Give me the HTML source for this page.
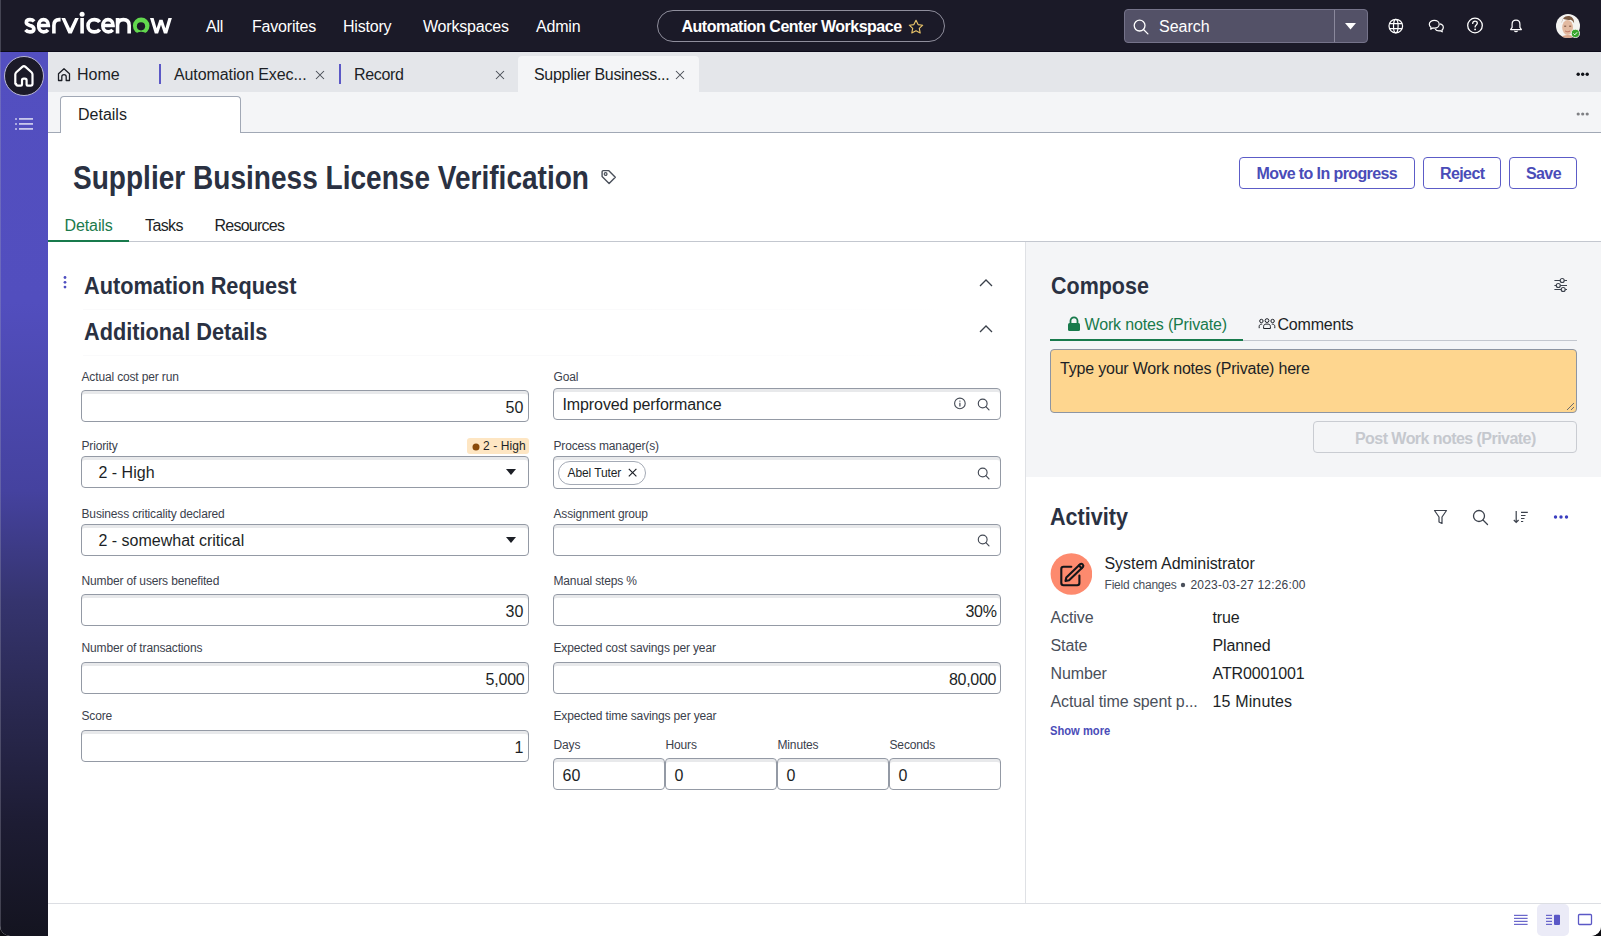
<!DOCTYPE html>
<html><head><meta charset="utf-8">
<style>
*{box-sizing:border-box;margin:0;padding:0}
html,body{width:1601px;height:936px;overflow:hidden;background:#0d0d12}
body{font-family:"Liberation Sans",sans-serif;position:relative}
.a{position:absolute}
.t{white-space:nowrap}
#win{position:absolute;left:0;top:0;width:1601px;height:936px;border-radius:0 0 10px 10px;overflow:hidden;background:#fff}
</style></head><body><div id="win">
<div class="a" style="left:0px;top:0px;width:1601px;height:52px;background:#1b1a28"></div>
<div class="a" style="left:0px;top:51px;width:1601px;height:1px;background:#0c0b1a"></div>
<svg class="a" style="left:20px;top:8px;" width="160" height="32" viewBox="20 8 160 32"><g fill="none" stroke="#fff" stroke-width="3.6"><path d="M34.2 21.4C33 20.1 31.6 19.65 30 19.65 27.8 19.65 26.3 20.7 26.3 22.5 26.3 24.4 28 24.9 30 25.5 32.2 26.1 33.9 26.9 33.9 28.9 33.9 30.9 32.1 31.85 30 31.85 28.1 31.85 26.5 31.1 25.5 29.8"/><path d="M38.7 25.5H48.35C48.35 22 46.3 19.65 43.5 19.65 40.6 19.65 38.65 22.3 38.65 25.75 38.65 29.3 40.7 31.85 43.7 31.85 45.6 31.85 47 31.1 48 29.8"/><path d="M53.9 33.5V25.5C53.9 21.6 56 19.65 59.2 19.65H60.6"/><path d="M82.1 18V33.5"/><path d="M99.6 22.1C98.5 20.5 96.6 19.65 94.3 19.65 90.6 19.65 88 22.3 88 25.75 88 29.2 90.6 31.85 94.3 31.85 96.6 31.85 98.5 31 99.6 29.4"/><path d="M102.9 25.5H113.05C113.05 22 111 19.65 108 19.65 104.9 19.65 102.85 22.3 102.85 25.75 102.85 29.3 105 31.85 108.2 31.85 110.2 31.85 111.7 31.1 112.7 29.8"/><path d="M117.55 18V33.5M117.55 25.5C117.55 21.8 119.8 19.65 123.35 19.65 126.9 19.65 129.15 21.8 129.15 25.5V33.5"/></g><g fill="#fff"><circle cx="82.1" cy="14.3" r="2.5"/><path d="M61.4 18H65.1L70.1 28.4 75.1 18H78.8L71.8 33.5H68.4Z"/><path d="M150 18H153.6L156.6 28.2 159.4 19.8H162.6L165.4 28.2 168.4 18H171.9L167.2 33.5H163.9L161 24.8 158.1 33.5H154.8Z"/></g><circle cx="141.2" cy="25.8" r="8.3" fill="#62d84e"/><circle cx="141" cy="26.3" r="4.1" fill="#1b1a28"/><circle cx="141.15" cy="39.7" r="7.9" fill="#1b1a28"/></svg>
<div class="a t " style="left:206px;top:19.0px;font-size:16px;line-height:16px;color:#fff;letter-spacing:-0.2px;">All</div>
<div class="a t " style="left:252px;top:19.0px;font-size:16px;line-height:16px;color:#fff;letter-spacing:-0.2px;">Favorites</div>
<div class="a t " style="left:343px;top:19.0px;font-size:16px;line-height:16px;color:#fff;letter-spacing:-0.2px;">History</div>
<div class="a t " style="left:423px;top:19.0px;font-size:16px;line-height:16px;color:#fff;letter-spacing:-0.2px;">Workspaces</div>
<div class="a t " style="left:536px;top:19.0px;font-size:16px;line-height:16px;color:#fff;letter-spacing:-0.2px;">Admin</div>
<div class="a" style="left:657px;top:10px;width:288px;height:32px;border:1px solid #8f8e9c;border-radius:16px"></div>
<div class="a t " style="left:681.5px;top:18.7px;font-size:16px;line-height:16px;color:#fff;font-weight:700;letter-spacing:-0.5px;">Automation Center Workspace</div>
<svg class="a" style="left:907px;top:18px;" width="18" height="17" viewBox="0 0 18 17"><path d="M9 2.3l2.1 4.3 4.6.6-3.4 3.2.9 4.6L9 12.8l-4.2 2.2.9-4.6-3.4-3.2 4.6-.6z" fill="none" stroke="#e9c46a" stroke-width="1.15" stroke-linejoin="round"/></svg>
<div class="a" style="left:1124px;top:9px;width:244px;height:34px;background:#535167;border:1px solid #75738a;border-radius:4px"></div>
<div class="a" style="left:1334px;top:10px;width:1px;height:32px;background:#8a889c"></div>
<svg class="a" style="left:1132px;top:18px;" width="18" height="18" viewBox="0 0 18 18"><circle cx="7.6" cy="7.6" r="5.4" fill="none" stroke="#fff" stroke-width="1.3"/><path d="M11.5 11.5l4.4 4.4" stroke="#fff" stroke-width="1.3" stroke-linecap="round"/></svg>
<div class="a t " style="left:1159px;top:18.7px;font-size:16px;line-height:16px;color:#fff;">Search</div>
<svg class="a" style="left:1344px;top:22px;" width="13" height="8" viewBox="0 0 13 8"><path d="M1 1h11L6.5 7.5z" fill="#fff"/></svg>
<svg class="a" style="left:1388px;top:18px;" width="16" height="16" viewBox="0 0 16 16"><g fill="none" stroke="#fff" stroke-width="1.2"><circle cx="7.8" cy="8.1" r="6.8"/><ellipse cx="7.8" cy="8.1" rx="2.3" ry="6.8"/><path d="M1.5 5.6h12.6M1.5 10.6h12.6"/></g></svg>
<svg class="a" style="left:1428px;top:19px;" width="17" height="15" viewBox="0 0 17 15"><g fill="none" stroke="#fff" stroke-width="1.2" stroke-linejoin="round"><path d="M6.3 1.3c2.8 0 4.9 1.8 4.9 3.9s-2.1 3.9-4.9 3.9c-.5 0-1-.1-1.5-.2L2.7 10.2l.3-2C2 7.5 1.3 6.4 1.3 5.2 1.3 3.1 3.5 1.3 6.3 1.3z"/><path d="M11.9 4.9c2 .4 3.4 1.8 3.4 3.5 0 1-.5 1.9-1.3 2.5l.2 1.9-1.9-1.1c-.4.1-.9.2-1.3.2-1.7 0-3.1-.7-3.8-1.8"/></g></svg>
<svg class="a" style="left:1466px;top:17px;" width="18" height="17" viewBox="0 0 18 17"><g fill="none" stroke="#fff" stroke-width="1.3"><circle cx="9" cy="8.5" r="7.3"/><path d="M6.7 6.4c0-1.3 1-2.2 2.3-2.2s2.3.9 2.3 2.1c0 1.6-2.2 1.8-2.2 3.6" stroke-linecap="round"/></g><circle cx="9.1" cy="12.4" r=".9" fill="#fff"/></svg>
<svg class="a" style="left:1509px;top:19px;" width="14" height="14" viewBox="0 0 14 14"><g fill="none" stroke="#fff" stroke-width="1.2" stroke-linejoin="round"><path d="M7 1.2c-2.3 0-3.9 1.8-3.9 4v3.2L1.6 10.6h10.8l-1.5-2.2V5.2C10.9 3 9.3 1.2 7 1.2z"/><path d="M5.5 11.8c.3.6.8.9 1.5.9s1.2-.3 1.5-.9"/></g></svg>
<svg class="a" style="left:1554px;top:12px;" width="28" height="28" viewBox="0 0 28 28"><defs><clipPath id="av"><circle cx="14" cy="14" r="12"/></clipPath></defs><circle cx="14" cy="14" r="12" fill="#f4f3f1"/><g clip-path="url(#av)"><path d="M6 27c1.5-3 4-4 8-4s6 1 7.5 4z" fill="#d9a58a"/><ellipse cx="13.6" cy="15.5" rx="5.4" ry="7.6" fill="#e2b9a0"/><path d="M7.8 11.5c-.3-4.5 2.5-7.6 6.3-7.6 3.6 0 6.3 2.6 6 7.5-.8-2-2-3.2-3.6-3.6-2 .5-5.5.2-7.2-1.2-.9 1.2-1.3 2.9-1.5 4.9z" fill="#7b5a42"/><path d="M10.2 14.2h2M15.2 14.2h2" stroke="#6e4a38" stroke-width="1"/><path d="M11.2 19c1.4 1 3.4 1 4.8 0" stroke="#b86a5a" stroke-width="1" fill="none"/></g><circle cx="21.4" cy="21.4" r="4.1" fill="#36a52b" stroke="#f4f3f1" stroke-width="0.9"/><path d="M19.5 21.5l1.3 1.3 2.3-2.5" stroke="#fff" stroke-width="1" fill="none"/></svg>
<div class="a" style="left:0px;top:52px;width:48px;height:884px;background:linear-gradient(180deg,#534fc0 0px,#524ebe 250px,#45429f 439px,#35346e 550px,#29284f 661px,#1d1c33 772px,#141420 884px)"></div>
<div class="a" style="left:0px;top:0px;width:1px;height:936px;background:rgba(170,170,185,0.3)"></div>
<svg class="a" style="left:4px;top:56px;" width="40" height="40" viewBox="0 0 40 40"><circle cx="20" cy="20" r="19.5" fill="#1b1a28" stroke="#b9b7d4" stroke-width="1"/><path d="M11.3 27.8v-9.3c0-.9.4-1.7 1-2.3l6-5.3c.9-.8 2.3-.8 3.2 0l6 5.3c.6.6 1 1.4 1 2.3v9.3c0 1-.8 1.8-1.8 1.8h-3c-.6 0-1.1-.5-1.1-1.1v-4.1c0-1-.8-1.7-1.7-1.7h-1.2c-.9 0-1.7.7-1.7 1.7v4.1c0 .6-.5 1.1-1.1 1.1h-3c-1 0-1.8-.8-1.8-1.8z" fill="none" stroke="#fff" stroke-width="2.2" stroke-linejoin="round"/></svg>
<svg class="a" style="left:14px;top:117px;" width="20" height="14" viewBox="0 0 20 14"><g fill="#c9c8ec"><rect x="1" y="1" width="2" height="2" rx="1"/><rect x="1" y="6" width="2" height="2" rx="1"/><rect x="1" y="11" width="2" height="2" rx="1"/><rect x="5" y="1" width="14" height="1.8"/><rect x="5" y="6" width="14" height="1.8"/><rect x="5" y="11" width="14" height="1.8"/></g></svg>
<div class="a" style="left:48px;top:52px;width:1553px;height:40px;background:#e4e6ea"></div>
<svg class="a" style="left:57px;top:67px;" width="14" height="15" viewBox="0 0 14 15"><path d="M1.5 13.5V6.8L7 1.8l5.5 5v6.7H9.2V9.8a2.2 2.2 0 0 0-4.4 0v3.7z" fill="none" stroke="#1c1f26" stroke-width="1.3" stroke-linejoin="round"/></svg>
<div class="a t " style="left:77px;top:66.7px;font-size:16px;line-height:16px;color:#1c1f26;">Home</div>
<div class="a" style="left:159px;top:64px;width:1.5px;height:20px;background:#5b58c6"></div>
<div class="a t " style="left:174px;top:66.7px;font-size:16px;line-height:16px;color:#1c1f26;letter-spacing:-0.1px;">Automation Exec...</div>
<svg class="a" style="left:315px;top:70px;" width="10" height="10" viewBox="0 0 10 10"><path d="M1 1l8 8M9 1L1 9" stroke="#454a53" stroke-width="1.05"/></svg>
<div class="a" style="left:339px;top:64px;width:1.5px;height:20px;background:#5b58c6"></div>
<div class="a t " style="left:354px;top:66.7px;font-size:16px;line-height:16px;color:#1c1f26;letter-spacing:-0.35px;">Record</div>
<svg class="a" style="left:495px;top:70px;" width="10" height="10" viewBox="0 0 10 10"><path d="M1 1l8 8M9 1L1 9" stroke="#454a53" stroke-width="1.05"/></svg>
<div class="a" style="left:518px;top:56px;width:181px;height:36px;background:#f4f5f7;border-radius:4px 4px 0 0"></div>
<div class="a t " style="left:534px;top:66.7px;font-size:16px;line-height:16px;color:#1c1f26;letter-spacing:-0.3px;">Supplier Business...</div>
<svg class="a" style="left:675px;top:70px;" width="10" height="10" viewBox="0 0 10 10"><path d="M1 1l8 8M9 1L1 9" stroke="#454a53" stroke-width="1.05"/></svg>
<svg class="a" style="left:1575px;top:71px;" width="16" height="7" viewBox="0 0 16 7"><circle cx="3.2" cy="3.2" r="1.7" fill="#101218"/><circle cx="7.7" cy="3.2" r="1.7" fill="#101218"/><circle cx="12.2" cy="3.2" r="1.7" fill="#101218"/></svg>
<div class="a" style="left:48px;top:92px;width:1553px;height:41px;background:#f4f5f7"></div>
<div class="a" style="left:48px;top:132px;width:1553px;height:1px;background:#a1a8b5"></div>
<div class="a" style="left:60px;top:96px;width:181px;height:37px;background:#fff;border:1px solid #a1a8b5;border-bottom:none;border-radius:4px 4px 0 0"></div>
<div class="a t " style="left:78px;top:106.7px;font-size:16px;line-height:16px;color:#1c1f26;">Details</div>
<svg class="a" style="left:1575px;top:111px;" width="16" height="7" viewBox="0 0 16 7"><circle cx="3.2" cy="3" r="1.6" fill="#7f8084"/><circle cx="7.7" cy="3" r="1.6" fill="#7f8084"/><circle cx="12.2" cy="3" r="1.6" fill="#7f8084"/></svg>
<div class="a" style="left:48px;top:133px;width:1553px;height:803px;background:#fff"></div>
<div class="a t " style="left:72.5px;top:161.0px;font-size:33px;line-height:33px;color:#2a3142;font-weight:700;transform:scaleX(0.85);transform-origin:0 0;">Supplier Business License Verification</div>
<svg class="a" style="left:599px;top:168px;" width="18" height="18" viewBox="0 0 18 18"><path d="M4.3 2.6H9.6L16.3 9.3 10.1 15.4 3.1 8.5V3.8a1.2 1.2 0 0 1 1.2-1.2z" fill="none" stroke="#4a505b" stroke-width="1.4" stroke-linejoin="round"/><circle cx="6.6" cy="6" r="1.4" fill="none" stroke="#4a505b" stroke-width="1.2"/></svg>
<div class="a" style="left:1239px;top:157px;width:176px;height:32px;border:1px solid #5c5cc7;border-radius:4px;background:#fff"></div>
<div class="a t " style="left:1256.5px;top:165.7px;font-size:16px;line-height:16px;color:#4a4cb8;font-weight:700;letter-spacing:-0.6px;">Move to In progress</div>
<div class="a" style="left:1423px;top:157px;width:78px;height:32px;border:1px solid #5c5cc7;border-radius:4px;background:#fff"></div>
<div class="a t " style="left:1440px;top:165.7px;font-size:16px;line-height:16px;color:#4a4cb8;font-weight:700;letter-spacing:-0.6px;">Reject</div>
<div class="a" style="left:1509px;top:157px;width:68px;height:32px;border:1px solid #5c5cc7;border-radius:4px;background:#fff"></div>
<div class="a t " style="left:1526px;top:165.7px;font-size:16px;line-height:16px;color:#4a4cb8;font-weight:700;letter-spacing:-0.6px;">Save</div>
<div class="a t " style="left:64.5px;top:217.7px;font-size:16px;line-height:16px;color:#1b7a4c;letter-spacing:-0.1px;">Details</div>
<div class="a t " style="left:145px;top:217.7px;font-size:16px;line-height:16px;color:#1c1f26;letter-spacing:-0.6px;">Tasks</div>
<div class="a t " style="left:214.5px;top:217.7px;font-size:16px;line-height:16px;color:#1c1f26;letter-spacing:-0.75px;">Resources</div>
<div class="a" style="left:48px;top:241px;width:1553px;height:1px;background:#c3c7cf"></div>
<div class="a" style="left:48px;top:240px;width:81px;height:2px;background:#187a4c"></div>
<svg class="a" style="left:62px;top:275px;" width="6" height="15" viewBox="0 0 6 15"><circle cx="3" cy="2.5" r="1.4" fill="#4f4fc0"/><circle cx="3" cy="7.3" r="1.4" fill="#4f4fc0"/><circle cx="3" cy="12.1" r="1.4" fill="#4f4fc0"/></svg>
<div class="a t " style="left:83.5px;top:273.9px;font-size:24px;line-height:24px;color:#2a3142;font-weight:700;transform:scaleX(0.905);transform-origin:0 0;">Automation Request</div>
<svg class="a" style="left:977.5px;top:278px;" width="16" height="10" viewBox="0 0 16 10"><path d="M2 8l6-6 6 6" fill="none" stroke="#3a404a" stroke-width="1.3"/></svg>
<div class="a" style="left:83px;top:309px;width:880px;height:1px;background:linear-gradient(90deg,#fafafb,#fafafb 60%,#fff)"></div>
<div class="a t " style="left:83.5px;top:319.9px;font-size:24px;line-height:24px;color:#2a3142;font-weight:700;transform:scaleX(0.905);transform-origin:0 0;">Additional Details</div>
<svg class="a" style="left:977.5px;top:324px;" width="16" height="10" viewBox="0 0 16 10"><path d="M2 8l6-6 6 6" fill="none" stroke="#3a404a" stroke-width="1.3"/></svg>
<div class="a" style="left:83px;top:355px;width:880px;height:1px;background:linear-gradient(90deg,#fafafb,#fafafb 60%,#fff)"></div>
<div class="a t " style="left:81.5px;top:370.7px;font-size:12px;line-height:12px;color:#3b414c;letter-spacing:-0.15px;">Actual cost per run</div>
<div class="a" style="left:81px;top:390px;width:448px;height:32px;border:1px solid #949aa5;border-radius:4px;background:#fff;box-shadow:inset 0 3px 0 #e8e9eb"></div>
<div class="a t " style="left:505.5px;top:399.7px;font-size:16px;line-height:16px;color:#1c1f26;">50</div>
<div class="a t " style="left:81.5px;top:439.7px;font-size:12px;line-height:12px;color:#3b414c;letter-spacing:-0.15px;">Priority</div>
<div class="a" style="left:467px;top:438px;width:62px;height:16px;background:#fee6c3;border-radius:3px"></div>
<svg class="a" style="left:471.5px;top:442.5px;" width="8" height="8" viewBox="0 0 8 8"><circle cx="4" cy="4" r="3.5" fill="#8a4b0b"/></svg>
<div class="a t " style="left:483px;top:439.7px;font-size:12px;line-height:12px;color:#1c1f26;letter-spacing:0.1px;">2 - High</div>
<div class="a" style="left:81px;top:456px;width:448px;height:32px;border:1px solid #949aa5;border-radius:4px;background:#fff;box-shadow:inset 0 3px 0 #e8e9eb"></div>
<div class="a t " style="left:98.5px;top:464.7px;font-size:16px;line-height:16px;color:#1c1f26;">2 - High</div>
<svg class="a" style="left:506px;top:469px;" width="10" height="6" viewBox="0 0 10 6"><path d="M0 0h10L5 6z" fill="#1c1f26"/></svg>
<div class="a t " style="left:81.5px;top:507.7px;font-size:12px;line-height:12px;color:#3b414c;letter-spacing:-0.15px;">Business criticality declared</div>
<div class="a" style="left:81px;top:524px;width:448px;height:32px;border:1px solid #949aa5;border-radius:4px;background:#fff;box-shadow:inset 0 3px 0 #e8e9eb"></div>
<div class="a t " style="left:98.5px;top:532.7px;font-size:16px;line-height:16px;color:#1c1f26;">2 - somewhat critical</div>
<svg class="a" style="left:506px;top:537px;" width="10" height="6" viewBox="0 0 10 6"><path d="M0 0h10L5 6z" fill="#1c1f26"/></svg>
<div class="a t " style="left:81.5px;top:574.7px;font-size:12px;line-height:12px;color:#3b414c;letter-spacing:-0.15px;">Number of users benefited</div>
<div class="a" style="left:81px;top:594px;width:448px;height:32px;border:1px solid #949aa5;border-radius:4px;background:#fff;box-shadow:inset 0 3px 0 #e8e9eb"></div>
<div class="a t " style="left:505.5px;top:603.7px;font-size:16px;line-height:16px;color:#1c1f26;">30</div>
<div class="a t " style="left:81.5px;top:642.2px;font-size:12px;line-height:12px;color:#3b414c;letter-spacing:-0.15px;">Number of transactions</div>
<div class="a" style="left:81px;top:662px;width:448px;height:32px;border:1px solid #949aa5;border-radius:4px;background:#fff;box-shadow:inset 0 3px 0 #e8e9eb"></div>
<div class="a t " style="left:485.5px;top:671.7px;font-size:16px;line-height:16px;color:#1c1f26;letter-spacing:-0.2px;">5,000</div>
<div class="a t " style="left:81.5px;top:710.2px;font-size:12px;line-height:12px;color:#3b414c;letter-spacing:-0.15px;">Score</div>
<div class="a" style="left:81px;top:730px;width:448px;height:32px;border:1px solid #949aa5;border-radius:4px;background:#fff;box-shadow:inset 0 3px 0 #e8e9eb"></div>
<div class="a t " style="left:514.5px;top:739.7px;font-size:16px;line-height:16px;color:#1c1f26;">1</div>
<div class="a t " style="left:553.5px;top:371.2px;font-size:12px;line-height:12px;color:#3b414c;letter-spacing:-0.15px;">Goal</div>
<div class="a" style="left:553px;top:388px;width:448px;height:32px;border:1px solid #949aa5;border-radius:4px;background:#fff;box-shadow:inset 0 3px 0 #e8e9eb"></div>
<div class="a t " style="left:562.5px;top:396.7px;font-size:16px;line-height:16px;color:#1c1f26;letter-spacing:-0.1px;">Improved performance</div>
<svg class="a" style="left:952px;top:396px;" width="14" height="14" viewBox="0 0 14 14"><circle cx="7.9" cy="7.4" r="5.3" fill="none" stroke="#454b56" stroke-width="1.1"/><path d="M7.9 6.8v3.6" stroke="#454b56" stroke-width="1.2"/><circle cx="7.9" cy="5.1" r=".7" fill="#454b56"/></svg>
<svg class="a" style="left:977px;top:397px;" width="14" height="14" viewBox="0 0 14 14"><circle cx="5.7" cy="6.5" r="4.4" fill="none" stroke="#454b56" stroke-width="1.15"/><path d="M8.9 9.7l3.1 3.1" stroke="#454b56" stroke-width="1.2" stroke-linecap="round"/></svg>
<div class="a t " style="left:553.5px;top:439.7px;font-size:12px;line-height:12px;color:#3b414c;letter-spacing:-0.15px;">Process manager(s)</div>
<div class="a" style="left:553px;top:456px;width:448px;height:33px;border:1px solid #949aa5;border-radius:4px;background:#fff;box-shadow:inset 0 3px 0 #e8e9eb"></div>
<div class="a" style="left:558px;top:461px;width:88px;height:24px;border:1px solid #a4aab5;border-radius:12px;background:#fff"></div>
<div class="a t " style="left:567.5px;top:467.3px;font-size:12px;line-height:12px;color:#1c1f26;letter-spacing:-0.1px;">Abel Tuter</div>
<svg class="a" style="left:628px;top:468px;" width="9" height="9" viewBox="0 0 9 9"><path d="M0.8 0.8l7.6 7.6M8.4 0.8L0.8 8.4" stroke="#1c1f26" stroke-width="1.15"/></svg>
<svg class="a" style="left:977px;top:466px;" width="14" height="14" viewBox="0 0 14 14"><circle cx="5.7" cy="6.5" r="4.4" fill="none" stroke="#454b56" stroke-width="1.15"/><path d="M8.9 9.7l3.1 3.1" stroke="#454b56" stroke-width="1.2" stroke-linecap="round"/></svg>
<div class="a t " style="left:553.5px;top:507.7px;font-size:12px;line-height:12px;color:#3b414c;letter-spacing:-0.15px;">Assignment group</div>
<div class="a" style="left:553px;top:524px;width:448px;height:32px;border:1px solid #949aa5;border-radius:4px;background:#fff;box-shadow:inset 0 3px 0 #e8e9eb"></div>
<svg class="a" style="left:977px;top:533px;" width="14" height="14" viewBox="0 0 14 14"><circle cx="5.7" cy="6.5" r="4.4" fill="none" stroke="#454b56" stroke-width="1.15"/><path d="M8.9 9.7l3.1 3.1" stroke="#454b56" stroke-width="1.2" stroke-linecap="round"/></svg>
<div class="a t " style="left:553.5px;top:574.7px;font-size:12px;line-height:12px;color:#3b414c;letter-spacing:-0.15px;">Manual steps %</div>
<div class="a" style="left:553px;top:594px;width:448px;height:32px;border:1px solid #949aa5;border-radius:4px;background:#fff;box-shadow:inset 0 3px 0 #e8e9eb"></div>
<div class="a t " style="left:965.5px;top:603.7px;font-size:16px;line-height:16px;color:#1c1f26;letter-spacing:-0.3px;">30%</div>
<div class="a t " style="left:553.5px;top:642.2px;font-size:12px;line-height:12px;color:#3b414c;letter-spacing:-0.15px;">Expected cost savings per year</div>
<div class="a" style="left:553px;top:662px;width:448px;height:32px;border:1px solid #949aa5;border-radius:4px;background:#fff;box-shadow:inset 0 3px 0 #e8e9eb"></div>
<div class="a t " style="left:949px;top:671.7px;font-size:16px;line-height:16px;color:#1c1f26;letter-spacing:-0.3px;">80,000</div>
<div class="a t " style="left:553.5px;top:710.2px;font-size:12px;line-height:12px;color:#3b414c;letter-spacing:-0.15px;">Expected time savings per year</div>
<div class="a t " style="left:553.5px;top:738.7px;font-size:12px;line-height:12px;color:#3b414c;letter-spacing:-0.15px;">Days</div>
<div class="a" style="left:553px;top:758px;width:112px;height:32px;border:1px solid #949aa5;border-radius:4px;background:#fff;box-shadow:inset 0 3px 0 #e8e9eb"></div>
<div class="a t " style="left:562.5px;top:767.7px;font-size:16px;line-height:16px;color:#1c1f26;">60</div>
<div class="a t " style="left:665.5px;top:738.7px;font-size:12px;line-height:12px;color:#3b414c;letter-spacing:-0.15px;">Hours</div>
<div class="a" style="left:665px;top:758px;width:112px;height:32px;border:1px solid #949aa5;border-radius:4px;background:#fff;box-shadow:inset 0 3px 0 #e8e9eb"></div>
<div class="a t " style="left:674.5px;top:767.7px;font-size:16px;line-height:16px;color:#1c1f26;">0</div>
<div class="a t " style="left:777.5px;top:738.7px;font-size:12px;line-height:12px;color:#3b414c;letter-spacing:-0.15px;">Minutes</div>
<div class="a" style="left:777px;top:758px;width:112px;height:32px;border:1px solid #949aa5;border-radius:4px;background:#fff;box-shadow:inset 0 3px 0 #e8e9eb"></div>
<div class="a t " style="left:786.5px;top:767.7px;font-size:16px;line-height:16px;color:#1c1f26;">0</div>
<div class="a t " style="left:889.5px;top:738.7px;font-size:12px;line-height:12px;color:#3b414c;letter-spacing:-0.15px;">Seconds</div>
<div class="a" style="left:889px;top:758px;width:112px;height:32px;border:1px solid #949aa5;border-radius:4px;background:#fff;box-shadow:inset 0 3px 0 #e8e9eb"></div>
<div class="a t " style="left:898.5px;top:767.7px;font-size:16px;line-height:16px;color:#1c1f26;">0</div>
<div class="a" style="left:1025px;top:242px;width:1px;height:661px;background:#dfe1e5"></div>
<div class="a" style="left:1026px;top:242px;width:575px;height:235px;background:#f4f5f7"></div>
<div class="a t " style="left:1050.5px;top:273.9px;font-size:24px;line-height:24px;color:#2a3142;font-weight:700;transform:scaleX(0.895);transform-origin:0 0;">Compose</div>
<svg class="a" style="left:1552px;top:277px;" width="16" height="16" viewBox="0 0 16 16"><g fill="none" stroke="#3b414c" stroke-width="1.15"><path d="M2.4 3.5h12.6M2.4 8.5h12.6M2.4 12.5h12.6"/><circle cx="10.2" cy="3.5" r="2" fill="#f4f5f7"/><circle cx="6.3" cy="8.5" r="2" fill="#f4f5f7"/><circle cx="11.2" cy="12.5" r="2" fill="#f4f5f7"/></g></svg>
<svg class="a" style="left:1067px;top:316px;" width="14" height="15" viewBox="0 0 14 15"><path d="M3.5 7V4.8a3.5 3.5 0 0 1 7 0V7" fill="none" stroke="#187a4c" stroke-width="1.8"/><rect x="1" y="7" width="12" height="8" rx="1.5" fill="#187a4c"/></svg>
<div class="a t " style="left:1084.5px;top:316.7px;font-size:16px;line-height:16px;color:#187a4c;letter-spacing:-0.15px;">Work notes (Private)</div>
<svg class="a" style="left:1258px;top:318px;" width="18" height="12" viewBox="0 0 18 12"><g fill="none" stroke="#1c1f26" stroke-width="1"><circle cx="3.4" cy="3" r="1.7"/><circle cx="9" cy="2.6" r="1.9"/><circle cx="14.6" cy="3" r="1.7"/><path d="M1.2 10.2V8.4c0-1.3.9-2.2 2.2-2.2h.8M16.8 10.2V8.4c0-1.3-.9-2.2-2.2-2.2h-.8M5.6 10.5V8.4c0-1.3 1-2.3 2.3-2.3h2.2c1.3 0 2.3 1 2.3 2.3v2.1z"/></g></svg>
<div class="a t " style="left:1277.5px;top:316.7px;font-size:16px;line-height:16px;color:#1c1f26;letter-spacing:-0.2px;">Comments</div>
<div class="a" style="left:1050px;top:340px;width:527px;height:1px;background:#c3c7cf"></div>
<div class="a" style="left:1050px;top:339px;width:193px;height:2px;background:#187a4c"></div>
<div class="a" style="left:1050px;top:349px;width:527px;height:64px;background:#fed68f;border:1px solid #8d95a3;border-radius:4px"></div>
<svg class="a" style="left:1566px;top:402px;" width="9" height="9" viewBox="0 0 9 9"><path d="M8 1L1 8M8 5L5 8" stroke="#6b6b6b" stroke-width="1"/></svg>
<div class="a t " style="left:1060px;top:360.7px;font-size:16px;line-height:16px;color:#1c1f26;letter-spacing:-0.2px;">Type your Work notes (Private) here</div>
<div class="a" style="left:1313px;top:421px;width:264px;height:32px;border:1px solid #c9ccd2;border-radius:4px;background:#f4f5f7"></div>
<div class="a t " style="left:1355px;top:430.7px;font-size:16px;line-height:16px;color:#c5c8ce;font-weight:700;letter-spacing:-0.55px;">Post Work notes (Private)</div>
<div class="a t " style="left:1049.8px;top:505.2px;font-size:24px;line-height:24px;color:#2a3142;font-weight:700;transform:scaleX(0.9);transform-origin:0 0;">Activity</div>
<svg class="a" style="left:1433px;top:509px;" width="15" height="16" viewBox="0 0 15 16"><path d="M1.5 1.5h12L9 8v6.5L6 13V8z" fill="none" stroke="#3b414c" stroke-width="1.2" stroke-linejoin="round"/></svg>
<svg class="a" style="left:1472px;top:509px;" width="17" height="17" viewBox="0 0 17 17"><circle cx="7" cy="7" r="5.5" fill="none" stroke="#3b414c" stroke-width="1.3"/><path d="M11 11l4.5 4.5" stroke="#3b414c" stroke-width="1.3" stroke-linecap="round"/></svg>
<svg class="a" style="left:1512px;top:509px;" width="17" height="16" viewBox="0 0 17 16"><g stroke="#3b414c" stroke-width="1.2" fill="none"><path d="M4.2 2v11.5M1.8 11L4.2 13.5 6.6 11"/><path d="M9 3.4h6.8M9 6.5h4.5M9 9.5h3.5M9 12.5h2.2"/></g></svg>
<svg class="a" style="left:1553px;top:514px;" width="16" height="6" viewBox="0 0 16 6"><circle cx="2.5" cy="3" r="1.7" fill="#3b3fc0"/><circle cx="8" cy="3" r="1.7" fill="#3b3fc0"/><circle cx="13.5" cy="3" r="1.7" fill="#3b3fc0"/></svg>
<svg class="a" style="left:1050px;top:553px;" width="42" height="42" viewBox="0 0 42 42"><circle cx="21.4" cy="21" r="20.8" fill="#fd8a6e"/><g transform="translate(0.5,0.8)" fill="none" stroke="#14161a" stroke-width="2.1" stroke-linejoin="round" stroke-linecap="round"><path d="M20.8 13H13a2.2 2.2 0 0 0-2.2 2.2V29.2a2.2 2.2 0 0 0 2.2 2.2H26.7a2.2 2.2 0 0 0 2.2-2.2V21.7"/><path d="M15 27.2L18.6 26.5L32.4 13.2A2 2 0 0 0 29.6 10.4L15.8 23.7Z"/><path d="M28.4 11.6l2.8 2.8"/></g></svg>
<div class="a t " style="left:1104.5px;top:556.2px;font-size:16px;line-height:16px;color:#1c1f26;letter-spacing:-0.05px;">System Administrator</div>
<div class="a t " style="left:1104.5px;top:578.5px;font-size:12px;line-height:12px;color:#4a505b;letter-spacing:-0.2px;">Field changes</div>
<svg class="a" style="left:1179.5px;top:581.5px;" width="6" height="6" viewBox="0 0 6 6"><circle cx="3" cy="3" r="2.2" fill="#4a505b"/></svg>
<div class="a t " style="left:1190.5px;top:578.5px;font-size:12px;line-height:12px;color:#3b414c;letter-spacing:0.2px;">2023-03-27 12:26:00</div>
<div class="a t " style="left:1050.5px;top:610.0px;font-size:16px;line-height:16px;color:#4a505b;letter-spacing:-0.1px;">Active</div>
<div class="a t " style="left:1212.5px;top:610.0px;font-size:16px;line-height:16px;color:#1c1f26;letter-spacing:-0.1px;">true</div>
<div class="a t " style="left:1050.5px;top:637.9px;font-size:16px;line-height:16px;color:#4a505b;letter-spacing:-0.1px;">State</div>
<div class="a t " style="left:1212.5px;top:637.9px;font-size:16px;line-height:16px;color:#1c1f26;letter-spacing:-0.1px;">Planned</div>
<div class="a t " style="left:1050.5px;top:666.2px;font-size:16px;line-height:16px;color:#4a505b;letter-spacing:-0.1px;">Number</div>
<div class="a t " style="left:1212.5px;top:666.2px;font-size:16px;line-height:16px;color:#1c1f26;letter-spacing:-0.1px;">ATR0001001</div>
<div class="a t " style="left:1050.5px;top:694.2px;font-size:16px;line-height:16px;color:#4a505b;letter-spacing:-0.1px;">Actual time spent p...</div>
<div class="a t " style="left:1212.5px;top:694.2px;font-size:16px;line-height:16px;color:#1c1f26;letter-spacing:0.15px;">15 Minutes</div>
<div class="a t " style="left:1050px;top:724.2px;font-size:13px;line-height:13px;color:#4a4cb8;font-weight:700;transform:scaleX(0.86);transform-origin:0 0;">Show more</div>
<div class="a" style="left:48px;top:903px;width:1553px;height:1px;background:#dcdee3"></div>
<div class="a" style="left:1537px;top:904px;width:32px;height:32px;background:#ebebf7;border-radius:5px"></div>
<svg class="a" style="left:1513px;top:913px;" width="16" height="14" viewBox="0 0 16 14"><g fill="#5b58c6"><rect x="1" y="1.8" width="13.6" height="1.1"/><rect x="1" y="4.8" width="13.6" height="1.1"/><rect x="1" y="7.8" width="13.6" height="1.1"/><rect x="1" y="10.8" width="13.6" height="1.1"/></g></svg>
<svg class="a" style="left:1545px;top:913px;" width="16" height="14" viewBox="0 0 16 14"><g fill="#5b58c6"><rect x="1" y="1.8" width="6" height="1.1"/><rect x="1" y="4.8" width="6" height="1.1"/><rect x="1" y="7.8" width="6" height="1.1"/><rect x="1" y="10.8" width="6" height="1.1"/><rect x="9" y="1.8" width="6" height="10.2" rx="1"/></g></svg>
<svg class="a" style="left:1577px;top:913px;" width="16" height="14" viewBox="0 0 16 14"><rect x="1.5" y="1.5" width="13" height="10" fill="none" stroke="#5b58c6" stroke-width="1.3" rx="1"/></svg>
</div></body></html>
